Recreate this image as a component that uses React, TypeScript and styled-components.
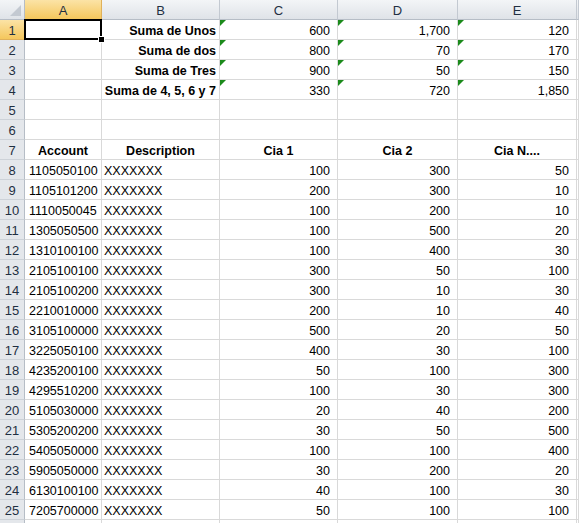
import React from "react";
import styled, { createGlobalStyle, css } from "styled-components";

const Global = createGlobalStyle`
  html, body { margin: 0; padding: 0; background: #ffffff; overflow: hidden; }
  body { font-family: "Liberation Sans", Arial, sans-serif; }
`;

const Sheet = styled.div`
  display: grid;
  grid-template-columns: 25px 77px 118px 118px 120px 119px 1fr;
  grid-auto-rows: 20px;
  width: 579px;
  height: 523px;
  overflow: hidden;
  font-family: "Liberation Sans", Arial, sans-serif;
  font-size: 12.5px;
  color: #000;
`;

const Corner = styled.div`
  position: relative;
  box-sizing: border-box;
  background: linear-gradient(#f3f5f7, #dfe3e8);
  border-right: 1px solid #b6bdc6;
  border-bottom: 1px solid #b6bdc6;
  &::after {
    content: "";
    position: absolute;
    right: 3px;
    bottom: 3px;
    width: 0;
    height: 0;
    border-left: 11px solid transparent;
    border-bottom: 11px solid #c3c9d1;
  }
`;

const ColHeader = styled.div<{ $selected?: boolean }>`
  box-sizing: border-box;
  display: flex;
  align-items: center;
  justify-content: center;
  padding-top: 2px;
  font-size: 13px;
  color: #1f2f42;
  border-right: 1px solid #c3c9d1;
  border-bottom: 1px solid #b6bdc6;
  background: linear-gradient(#f3f5f7, #dfe3e8);
  ${(p) =>
    p.$selected &&
    css`
      background: linear-gradient(#fbe3a6, #f5c75c);
      border-bottom-color: #e4a73c;
      border-right-color: #e0b15a;
    `}
`;

const RowHeader = styled.div<{ $selected?: boolean }>`
  box-sizing: border-box;
  display: flex;
  align-items: center;
  justify-content: center;
  padding-top: 2px;
  font-size: 13px;
  color: #1f2f42;
  border-right: 1px solid #b6bdc6;
  border-bottom: 1px solid #cdd2d8;
  background: #e4e7eb;
  ${(p) =>
    p.$selected &&
    css`
      background: linear-gradient(#fbe3a6, #f5c75c);
      border-right-color: #e4a73c;
      border-bottom-color: #e0b15a;
    `}
`;

type Align = "left" | "right" | "center";

const Cell = styled.div<{ $align?: Align; $bold?: boolean; $pad?: number; $active?: boolean; $flag?: boolean }>`
  position: relative;
  box-sizing: border-box;
  display: flex;
  align-items: center;
  padding-top: 2px;
  justify-content: ${(p) => (p.$align === "right" ? "flex-end" : p.$align === "center" ? "center" : "flex-start")};
  padding-left: ${(p) => (p.$align === "left" ? p.$pad ?? 3 : 0)}px;
  padding-right: ${(p) => (p.$align === "right" ? p.$pad ?? 7 : 0)}px;
  font-weight: ${(p) => (p.$bold ? 700 : 400)};
  white-space: nowrap;
  border-right: 1px solid #d9d9d9;
  border-bottom: 1px solid #d9d9d9;
  ${(p) =>
    p.$flag &&
    css`
      &::before {
        content: "";
        position: absolute;
        left: 0;
        top: 0;
        width: 0;
        height: 0;
        border-top: 6px solid #1b8a1b;
        border-right: 6px solid transparent;
      }
    `}
  ${(p) =>
    p.$active &&
    css`
      z-index: 2;
      &::before {
        content: "";
        position: absolute;
        left: -1px;
        top: -1px;
        right: -1px;
        bottom: -1px;
        border: 2px solid #000;
        pointer-events: none;
      }
      &::after {
        content: "";
        position: absolute;
        right: -4px;
        bottom: -4px;
        width: 5px;
        height: 5px;
        background: #000;
        border: 1px solid #fff;
      }
    `}
`;

const cols = ["A", "B", "C", "D", "E"];

const summary: [string, string, string, string][] = [
  ["Suma de Unos", "600", "1,700", "120"],
  ["Suma de dos", "800", "70", "170"],
  ["Suma de Tres", "900", "50", "150"],
  ["Suma de 4, 5, 6 y 7", "330", "720", "1,850"],
];

const data: [string, string, string, string][] = [
  ["1105050100", "100", "300", "50"],
  ["1105101200", "200", "300", "10"],
  ["1110050045", "100", "200", "10"],
  ["1305050500", "100", "500", "20"],
  ["1310100100", "100", "400", "30"],
  ["2105100100", "300", "50", "100"],
  ["2105100200", "300", "10", "30"],
  ["2210010000", "200", "10", "40"],
  ["3105100000", "500", "20", "50"],
  ["3225050100", "400", "30", "100"],
  ["4235200100", "50", "100", "300"],
  ["4295510200", "100", "30", "300"],
  ["5105030000", "20", "40", "200"],
  ["5305200200", "30", "50", "500"],
  ["5405050000", "100", "100", "400"],
  ["5905050000", "30", "200", "20"],
  ["6130100100", "40", "100", "30"],
  ["7205700000", "50", "100", "100"],
];

const headers = ["Account", "Description", "Cia 1", "Cia 2", "Cia N...."];

const EmptyRow: React.FC<{ n: number; label?: boolean }> = ({ n, label = true }) => (
  <>
    <RowHeader>{label ? n : null}</RowHeader>
    {cols.map((c) => (
      <Cell key={c} />
    ))}
    <Cell />
  </>
);

export default function App() {
  return (
    <>
      <Global />
      <Sheet>
        <Corner />
        {cols.map((c, i) => (
          <ColHeader key={c} $selected={i === 0}>
            {c}
          </ColHeader>
        ))}
        <ColHeader />

        {summary.map((r, i) => (
          <React.Fragment key={`s${i}`}>
            <RowHeader $selected={i === 0}>{i + 1}</RowHeader>
            <Cell $active={i === 0} />
            <Cell $align="right" $bold $pad={3}>
              {r[0]}
            </Cell>
            <Cell $align="right" $flag>
              {r[1]}
            </Cell>
            <Cell $align="right" $flag>
              {r[2]}
            </Cell>
            <Cell $align="right" $flag>
              {r[3]}
            </Cell>
            <Cell />
          </React.Fragment>
        ))}

        <EmptyRow n={5} />
        <EmptyRow n={6} />

        <RowHeader>7</RowHeader>
        {headers.map((h) => (
          <Cell key={h} $align="center" $bold>
            {h}
          </Cell>
        ))}
        <Cell />

        {data.map((r, i) => (
          <React.Fragment key={`d${i}`}>
            <RowHeader>{i + 8}</RowHeader>
            <Cell $align="left" $pad={4}>
              {r[0]}
            </Cell>
            <Cell $align="left" $pad={2}>
              XXXXXXX
            </Cell>
            <Cell $align="right">{r[1]}</Cell>
            <Cell $align="right">{r[2]}</Cell>
            <Cell $align="right">{r[3]}</Cell>
            <Cell />
          </React.Fragment>
        ))}

        <EmptyRow n={26} label={false} />
      </Sheet>
    </>
  );
}
